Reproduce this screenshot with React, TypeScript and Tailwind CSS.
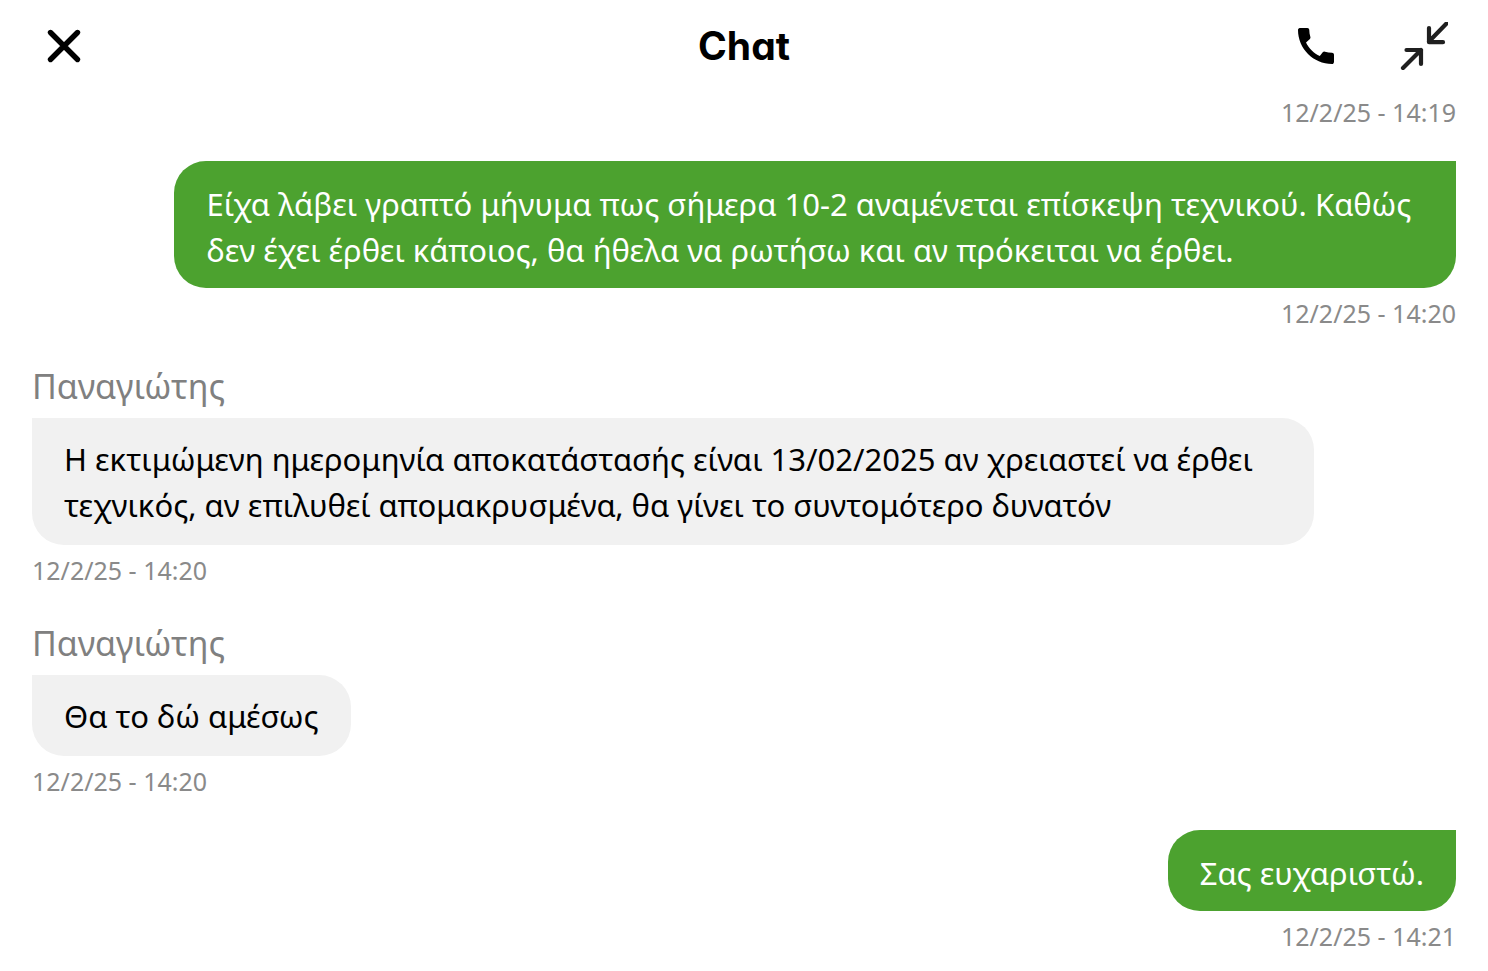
import clsx from "clsx";
import { MdCall } from "react-icons/md";

type Message = {
  id: number;
  from: "me" | "agent";
  author?: string;
  text: string;
  time: string;
};

const MESSAGES: Message[] = [
  {
    id: 1,
    from: "me",
    text: "Είχα λάβει γραπτό μήνυμα πως σήμερα 10-2 αναμένεται επίσκεψη τεχνικού. Καθώς δεν έχει έρθει κάποιος, θα ήθελα να ρωτήσω και αν πρόκειται να έρθει.",
    time: "12/2/25 - 14:20",
  },
  {
    id: 2,
    from: "agent",
    author: "Παναγιώτης",
    text: "Η εκτιμώμενη ημερομηνία αποκατάστασής είναι 13/02/2025 αν χρειαστεί να έρθει τεχνικός, αν επιλυθεί απομακρυσμένα, θα γίνει το συντομότερο δυνατόν",
    time: "12/2/25 - 14:20",
  },
  { id: 3, from: "agent", author: "Παναγιώτης", text: "Θα το δώ αμέσως", time: "12/2/25 - 14:20" },
  { id: 4, from: "me", text: "Σας ευχαριστώ.", time: "12/2/25 - 14:21" },
];

function CloseIcon() {
  return (
    <svg viewBox="0 0 48 48" className="size-12" fill="none" stroke="currentColor" strokeWidth="5.4" strokeLinecap="round" aria-hidden="true">
      <path d="M10.5 10.5l27 27M37.5 10.5l-27 27" />
    </svg>
  );
}

function CollapseIcon() {
  return (
    <svg viewBox="0 0 48 48" className="size-12" fill="none" stroke="currentColor" strokeWidth="4.2" strokeLinecap="round" strokeLinejoin="round" aria-hidden="true">
      <path d="M46.5 1.5L29 19.5M29 6V20.2H43" />
      <path d="M3 46L21 28M6.5 28H21V42" />
    </svg>
  );
}

function Timestamp({ children }: { children: string }) {
  return <time className="text-[25px] leading-[34px] text-[#8a8a8a]">{children}</time>;
}

function MessageRow({ message }: { message: Message }) {
  const mine = message.from === "me";
  return (
    <li className={clsx("flex flex-col", mine ? "items-end" : "items-start")}>
      {message.author && (
        <span className="mb-2 text-[34px] leading-[48px] text-[#808080]">{message.author}</span>
      )}
      <p
        className={clsx(
          "mb-2 max-w-[90%] px-8 text-[31px] leading-[46px]",
          mine
            ? "rounded-l-[32px] rounded-br-[32px] bg-[#4ca22f] pt-5 pb-[15px] text-white"
            : "rounded-r-[32px] rounded-bl-[32px] bg-[#f1f1f1] pt-[18px] pb-[17px] text-black",
        )}
      >
        {message.text}
      </p>
      <Timestamp>{message.time}</Timestamp>
    </li>
  );
}

export default function App() {
  return (
    <div className="min-h-screen bg-white font-['Noto_Sans',sans-serif]">
      <header className="grid h-[91px] grid-cols-[1fr_auto_1fr] items-center px-10 text-black">
        <button type="button" aria-label="Close" className="justify-self-start">
          <CloseIcon />
        </button>
        <h1 className="font-['Inter',sans-serif] text-[39px] leading-[46px] font-bold [font-feature-settings:'cv11']">Chat</h1>
        <div className="flex items-center gap-[60px] justify-self-end">
          <button type="button" aria-label="Call">
            <MdCall className="size-12" />
          </button>
          <button type="button" aria-label="Minimize" className="text-[#1f1f1f]">
            <CollapseIcon />
          </button>
        </div>
      </header>

      <main className="px-8 pt-1">
        <div className="mb-8 flex justify-end">
          <Timestamp>12/2/25 - 14:19</Timestamp>
        </div>
        <ul className="space-y-8">
          {MESSAGES.map((m) => (
            <MessageRow key={m.id} message={m} />
          ))}
        </ul>
      </main>
    </div>
  );
}
